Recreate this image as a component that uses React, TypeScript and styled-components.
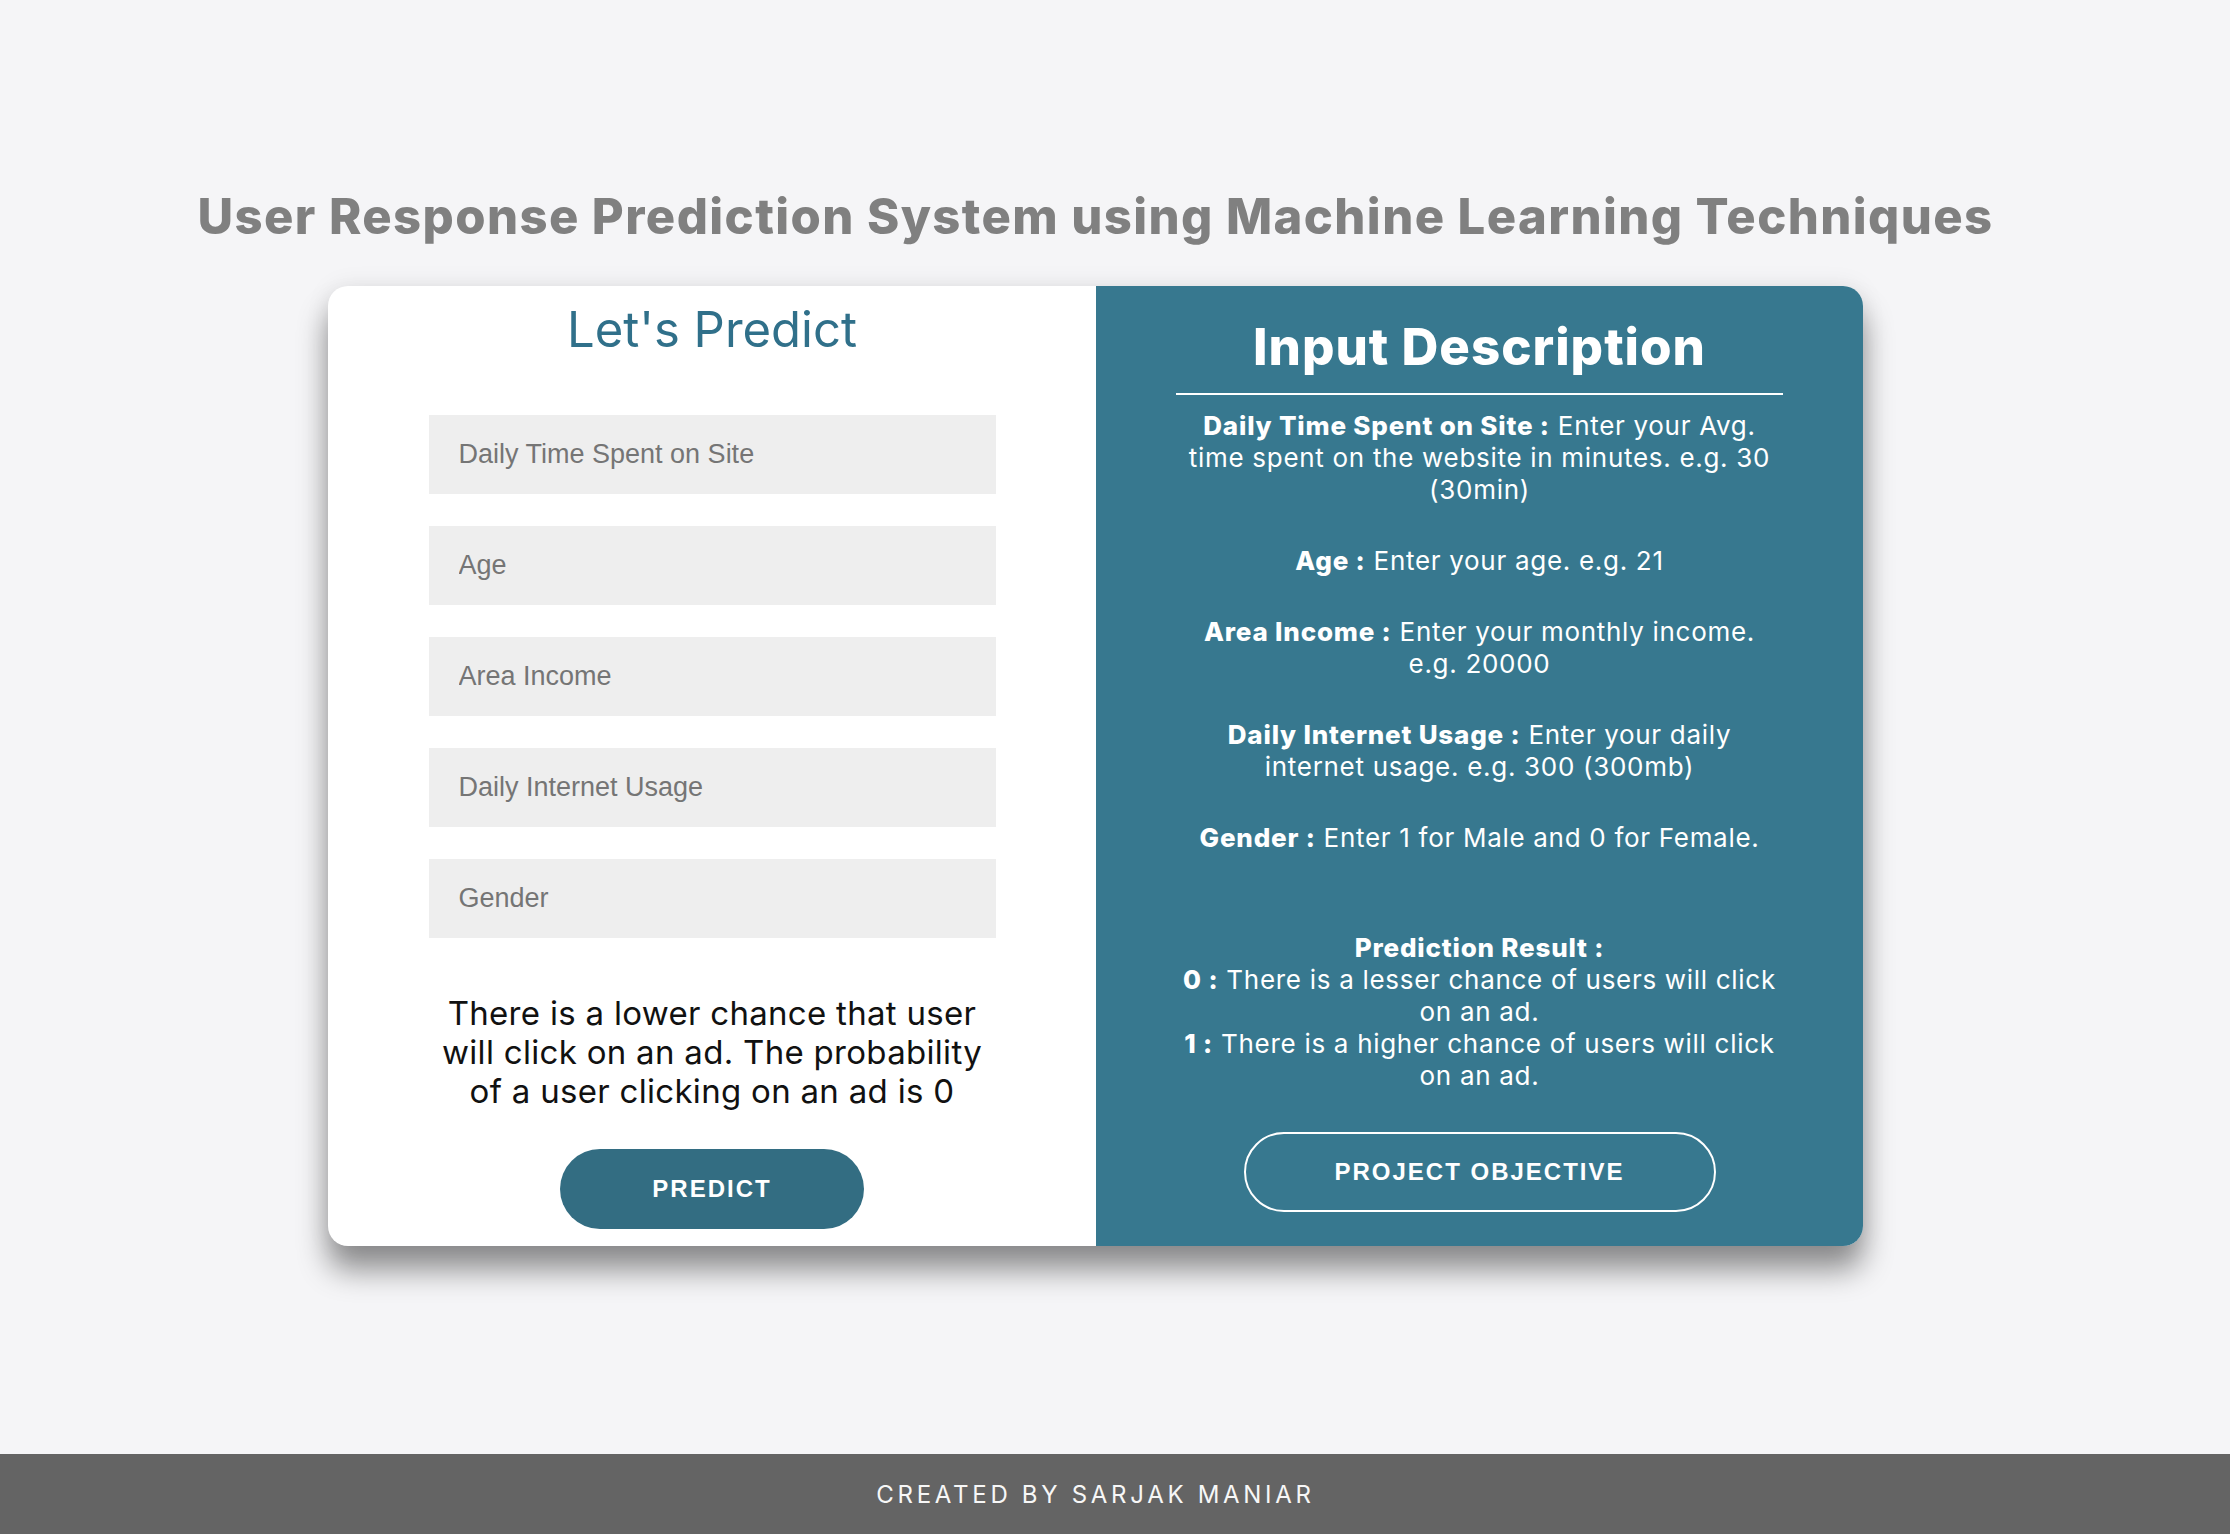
import * as React from "react";
import styled, { createGlobalStyle } from "styled-components";

const GlobalStyle = createGlobalStyle`
  html, body {
    margin: 0;
    padding: 0;
    background: #f5f5f7;
    font-family: Inter, "Open Sans", sans-serif;
  }
  * {
    box-sizing: border-box;
  }
`;

const Page = styled.div`
  display: flex;
  flex-direction: column;
  min-height: 100vh;
`;

const Main = styled.main`
  display: flex;
  flex-direction: column;
  align-items: center;
  padding: 192px 39px 0 0;
`;

const Title = styled.h1`
  margin: 0;
  font-size: 49px;
  line-height: 49px;
  font-weight: 800;
  letter-spacing: 1.4px;
  color: #808080;
`;

const Card = styled.section`
  display: grid;
  grid-template-columns: 768px 767px;
  width: 1535px;
  margin-top: 45px;
  border-radius: 20px;
  overflow: hidden;
  background: #ffffff;
  box-shadow: 0 24px 30px rgba(0, 0, 0, 0.42), 0 0 24px rgba(0, 0, 0, 0.08);
`;

const LeftPanel = styled.div`
  display: flex;
  flex-direction: column;
  align-items: center;
  padding: 20px 0 17px;
`;

const PanelHeading = styled.h2`
  margin: 0;
  font-size: 49px;
  line-height: 48px;
  font-weight: 400;
  color: #30708a;
`;

const Form = styled.form`
  display: flex;
  flex-direction: column;
  gap: 32px;
  width: 567px;
  margin-top: 61px;
`;

const Field = styled.input`
  height: 79px;
  width: 100%;
  padding: 0 30px;
  border: none;
  outline: none;
  background: #eeeeee;
  font-family: "Liberation Sans", Arial, sans-serif;
  font-size: 27px;
  color: #444;

  &::placeholder {
    color: #757575;
  }
`;

const ResultText = styled.p`
  margin: 56px 0 0;
  font-size: 33px;
  line-height: 39px;
  letter-spacing: 0.3px;
  text-align: center;
  color: #111;
  white-space: nowrap;
`;

const PredictButton = styled.button`
  margin-top: 38px;
  width: 304px;
  height: 80px;
  border: none;
  border-radius: 40px;
  background: #336d82;
  color: #ffffff;
  font-family: "Liberation Sans", Arial, sans-serif;
  font-size: 24px;
  font-weight: 700;
  letter-spacing: 2px;
  cursor: pointer;
`;

const RightPanel = styled.div`
  display: flex;
  flex-direction: column;
  align-items: center;
  padding: 37px 0 33px;
  background: #37788f;
  color: #ffffff;
  text-align: center;
`;

const DescHeading = styled.h2`
  margin: 0;
  font-size: 51px;
  line-height: 48px;
  font-weight: 800;
  letter-spacing: 1px;
`;

const Rule = styled.hr`
  width: 607px;
  height: 2px;
  margin: 22px 0 0;
  border: none;
  background: #ffffff;
`;

const DescList = styled.div`
  margin-top: 15px;
  font-size: 26px;
  line-height: 32px;
  letter-spacing: 0.7px;
`;

const DescItem = styled.p<{ $gap?: number }>`
  margin: ${(p) => p.$gap ?? 0}px 0 0;
  white-space: nowrap;

  b {
    font-weight: 800;
    letter-spacing: 0.8px;
  }
`;

const OutlineButton = styled.button`
  margin-top: 40px;
  width: 472px;
  height: 80px;
  border: 2px solid #ffffff;
  border-radius: 40px;
  background: transparent;
  color: #ffffff;
  font-family: "Liberation Sans", Arial, sans-serif;
  font-size: 24px;
  font-weight: 700;
  letter-spacing: 2px;
  cursor: pointer;
`;

const Footer = styled.footer`
  display: flex;
  align-items: center;
  justify-content: center;
  height: 80px;
  margin-top: auto;
  padding-right: 39px;
  background: #646464;
  color: #f7f7f7;
  font-size: 24px;
  letter-spacing: 3.7px;
`;

const fields = [
  "Daily Time Spent on Site",
  "Age",
  "Area Income",
  "Daily Internet Usage",
  "Gender",
];

export default function App() {
  return (
    <Page>
      <GlobalStyle />
      <Main>
        <Title>User Response Prediction System using Machine Learning Techniques</Title>
        <Card>
          <LeftPanel>
            <PanelHeading>Let's Predict</PanelHeading>
            <Form onSubmit={(e) => e.preventDefault()}>
              {fields.map((f) => (
                <Field key={f} placeholder={f} />
              ))}
            </Form>
            <ResultText>
              There is a lower chance that user
              <br />
              will click on an ad. The probability
              <br />
              of a user clicking on an ad is 0
            </ResultText>
            <PredictButton>PREDICT</PredictButton>
          </LeftPanel>
          <RightPanel>
            <DescHeading>Input Description</DescHeading>
            <Rule />
            <DescList>
              <DescItem>
                <b>Daily Time Spent on Site :</b> Enter your Avg.
                <br />
                time spent on the website in minutes. e.g. 30
                <br />
                (30min)
              </DescItem>
              <DescItem $gap={39}>
                <b>Age :</b> Enter your age. e.g. 21
              </DescItem>
              <DescItem $gap={39}>
                <b>Area Income :</b> Enter your monthly income.
                <br />
                e.g. 20000
              </DescItem>
              <DescItem $gap={39}>
                <b>Daily Internet Usage :</b> Enter your daily
                <br />
                internet usage. e.g. 300 (300mb)
              </DescItem>
              <DescItem $gap={39}>
                <b>Gender :</b> Enter 1 for Male and 0 for Female.
              </DescItem>
              <DescItem $gap={78}>
                <b>Prediction Result :</b>
                <br />
                <b>0 :</b> There is a lesser chance of users will click
                <br />
                on an ad.
                <br />
                <b>1 :</b> There is a higher chance of users will click
                <br />
                on an ad.
              </DescItem>
            </DescList>
            <OutlineButton>PROJECT OBJECTIVE</OutlineButton>
          </RightPanel>
        </Card>
      </Main>
      <Footer>CREATED BY SARJAK MANIAR</Footer>
    </Page>
  );
}
